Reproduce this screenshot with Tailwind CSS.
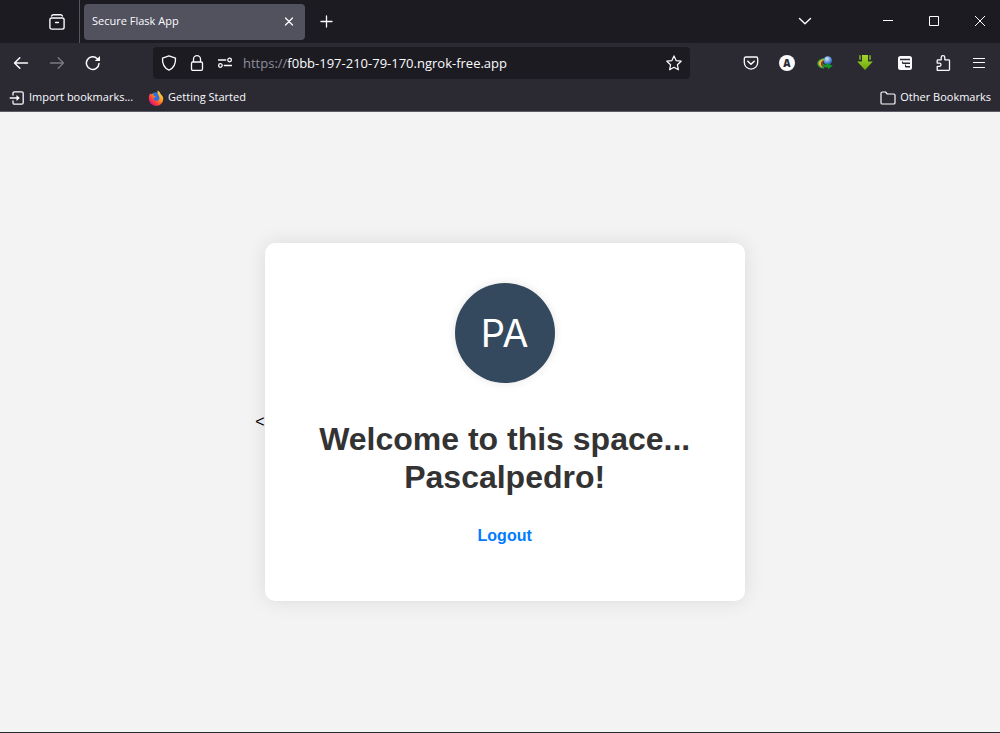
<!DOCTYPE html>
<html lang="en">
<head>
<meta charset="utf-8">
<title>Secure Flask App</title>
<script src="https://cdn.jsdelivr.net/npm/@tailwindcss/browser@4"></script>
</head>
<body class="flex min-h-screen flex-col bg-[#f3f3f3] font-['Liberation_Sans',Arial,sans-serif]">
<header class="bg-[#2b2a33] font-['Open_Sans',sans-serif] text-[11px] text-[#fbfbfe]">
  <!-- Tab strip -->
  <div class="flex h-[43px] items-center bg-[#1c1b22] pr-2">
    <div class="flex h-full w-20 items-center justify-end border-r border-[#55545e] pr-3.5">
      <button aria-label="View" class="size-4"><svg class="size-4" viewBox="0 0 16 16" fill="none" stroke="currentColor" stroke-width="1.4" stroke-linecap="round"><path d="M2.600 2C3 .9 3.600.7 4.400.7h7.200c.8 0 1.400.2 1.800 1.300"/><rect x=".9" y="4" width="14.200" height="11.100" rx="1.800"/><path d="M6.600 8.500h2.800"/></svg></button>
    </div>
    <div class="ml-1 flex h-9 w-[221px] items-center justify-between rounded bg-[#52525e] pr-2.5 pl-2">
      <span>Secure Flask App</span>
      <button aria-label="Close tab" class="grid size-3 place-items-center"><svg class="size-2.5" viewBox="0 0 10 10" stroke="currentColor" stroke-width="1.3" stroke-linecap="round"><path d="M1.500 1l7 7M8.500 1l-7 7"/></svg></button>
    </div>
    <button aria-label="New tab" class="ml-2.5 grid size-6 place-items-center"><svg class="size-3.5" viewBox="0 0 14 14" stroke="currentColor" stroke-width="1.3" stroke-linecap="round"><path d="M6.500 1v11M1 6.500h11"/></svg></button>
    <div class="ml-auto flex items-center">
      <button aria-label="List all tabs" class="mr-[59px] grid size-6 place-items-center"><svg class="size-3.5" viewBox="0 0 14 14" fill="none" stroke="currentColor" stroke-width="1.4" stroke-linecap="round" stroke-linejoin="round"><path d="M1.500 3.500L7 8.800 12.500 3.500"/></svg></button>
      <div class="flex gap-[22px]">
        <button aria-label="Minimize" class="grid size-6 place-items-center"><svg class="size-3" viewBox="0 0 12 12" stroke="#fff"><path d="M1 4.500h10"/></svg></button>
        <button aria-label="Maximize" class="grid size-6 place-items-center"><svg class="size-3" viewBox="0 0 12 12" fill="none" stroke="#fff"><path d="M1.500 .5h9v9h-9z"/></svg></button>
        <button aria-label="Close" class="grid size-6 place-items-center"><svg class="size-3" viewBox="0 0 12 12" stroke="#fff"><path d="M1 0l10 10M11 0L1 10"/></svg></button>
      </div>
    </div>
  </div>
  <!-- Navigation bar -->
  <div class="flex h-10 items-center px-[9px]">
    <div class="flex gap-3">
      <button aria-label="Back" class="grid size-6 place-items-center"><svg class="size-4" viewBox="0 0 16 16" fill="none" stroke="currentColor" stroke-width="1.5" stroke-linecap="round" stroke-linejoin="round"><path d="M14.500 8h-13M6.800 2.700L1.500 8l5.300 5.300"/></svg></button>
      <button aria-label="Forward" disabled class="grid size-6 place-items-center text-[#7b7a82]"><svg class="size-4" viewBox="0 0 16 16" fill="none" stroke="currentColor" stroke-width="1.300" stroke-linecap="round" stroke-linejoin="round"><path d="M1.500 8h13M9.200 2.700L14.500 8l-5.300 5.300"/></svg></button>
      <button aria-label="Reload" class="grid size-6 place-items-center"><svg class="size-4" viewBox="0 0 16 16" fill="none" stroke="currentColor" stroke-width="1.500" stroke-linecap="round"><path d="M14 8.500A6.300 6.300 0 1 1 12.300 3.800"/><path d="M15 .9v5.200h-5.200z" fill="currentColor" stroke="none"/></svg></button>
    </div>
    <div class="ml-12 flex h-8 min-w-0 flex-1 items-center rounded bg-[#1c1b22] px-2">
      <button aria-label="Tracking protection" class="size-4"><svg class="size-4" viewBox="0 0 16 16" fill="none" stroke="currentColor" stroke-width="1.300" stroke-linejoin="round"><path d="M8 .8L14.500 3.200c.3 4.800-1.300 9.500-6.500 12C2.800 12.700 1.200 8 1.500 3.200z"/></svg></button>
      <button aria-label="Site security" class="ml-3 size-4"><svg class="size-4" viewBox="0 0 16 16" fill="none" stroke="currentColor" stroke-width="1.300"><rect x="2.500" y="7" width="11" height="8.300" rx="1.300"/><path d="M4.500 7V4.200a3.500 3.500 0 0 1 7 0V7"/></svg></button>
      <button aria-label="Permissions" class="ml-3 size-4"><svg class="size-4" viewBox="0 0 16 16" fill="none" stroke="currentColor" stroke-width="1.300" stroke-linecap="round"><path d="M1.500 5h7.200M7.300 10.500h7.200"/><circle cx="12.600" cy="5" r="1.800"/><circle cx="3.400" cy="10.500" r="1.800"/></svg></button>
      <label for="url" class="ml-2.5 pt-0.5 text-[13px] text-[#8f8f9d]">https://</label>
      <input id="url" type="text" value="f0bb-197-210-79-170.ngrok-free.app" class="min-w-0 flex-1 bg-transparent pt-0.5 text-[13px] outline-none">
      <button aria-label="Bookmark this page" class="size-4"><svg class="size-4" viewBox="0 0 16 16" fill="none" stroke="currentColor" stroke-width="1.200" stroke-linejoin="round"><path d="M8 .9l2.100 4.700 5.100.6-3.800 3.500 1 5.100L8 12.300l-4.400 2.500 1-5.100L.8 6.200l5.100-.6z"/></svg></button>
    </div>
    <div class="ml-[49px] flex gap-3">
      <button aria-label="Save to Pocket" class="grid h-6 w-6 place-items-center"><svg class="size-4" viewBox="0 0 16 16" fill="none" stroke="currentColor" stroke-width="1.300" stroke-linecap="round" stroke-linejoin="round"><path d="M2.700 2h10.600c.8 0 1.400.6 1.400 1.400v4A6.700 6.700 0 0 1 1.300 7.400v-4C1.300 2.600 1.900 2 2.700 2z"/><path d="M4.800 6.200L8 9.200l3.200-3" stroke-width="1.500"/></svg></button>
      <button aria-label="Account" class="grid h-6 w-6 place-items-center"><span class="grid size-4 place-items-center rounded-full bg-[#fbfbfe] text-[10px] leading-none font-extrabold text-[#2b2a33]">A</span></button>
      <button aria-label="Download manager" class="grid h-6 w-7 place-items-center"><svg class="size-4" viewBox="0 0 16 16"><defs><radialGradient id="globe" cx=".4" cy=".3" r=".7"><stop offset="0" stop-color="#d5eafc"/><stop offset=".5" stop-color="#6d9fdf"/><stop offset="1" stop-color="#2355a0"/></radialGradient></defs><circle cx="10.800" cy="5.600" r="4.300" fill="url(#globe)"/><path d="M7.500 3C3 3.500 0 6 .3 9c.4 3 4 4.800 7.200 4.300l-.6-1.600C4.500 11.500 2.800 10.400 3 8.600 3.200 6.800 5 5 7.500 4.400z" fill="#3aa04a"/><path d="M7 4C3.500 4.500 1.500 6.500 1.700 8.700c.3 2 2.300 3.200 4.800 3.500C4.300 10.800 3.800 9.500 4.200 8 4.600 6.500 5.600 5.300 7.200 5z" fill="#f0b52b"/><path d="M6 5.600C3.700 7.300 3.600 10.300 6 11.800l1.300-.8C5.300 9.700 5.200 7.500 6.700 5.800z" fill="#a83a2e"/><path d="M6.200 6.800c-.6 1.900.6 3.200 3.300 3L9.500 8.200l6.300 2.600-4.800 3.400v-1.700C7.400 13 4.400 10.300 6.200 6.800z" fill="#12992a"/></svg></button>
      <button aria-label="Downloads" class="grid h-6 w-7 place-items-center"><svg class="size-4" viewBox="0 0 16 16"><defs><linearGradient id="lime" x2="0" y2="1"><stop stop-color="#a5d82d"/><stop offset="1" stop-color="#6ea70d"/></linearGradient></defs><path d="M5 0h6v6.500h4.800L8 15 .2 6.500H5z" fill="url(#lime)"/><path d="M2 .3h2v4.500H2zM12 .3h2v4.500h-2z" fill="#6d9420"/></svg></button>
      <button aria-label="Reader tools" class="grid h-6 w-7 place-items-center"><svg class="size-4" viewBox="0 0 16 16" fill="#fbfbfe"><path d="M3.500 1h9A2.500 2.500 0 0 1 15 3.500v9a2.500 2.500 0 0 1-2.500 2.500h-9A2.500 2.500 0 0 1 1 12.500v-9A2.500 2.500 0 0 1 3.500 1z"/><path d="M3 4.500h10M6 8.200h7M8.800 11.700H13" stroke="#2b2a33" stroke-width="1.500"/><path d="M5.500 6.500v2.200M8.500 9.500v2.700" stroke="#2b2a33"/></svg></button>
      <button aria-label="Extensions" class="grid h-6 w-6 place-items-center"><svg class="size-4" viewBox="0 0 16 16" fill="none" stroke="currentColor" stroke-width="1.300" stroke-linejoin="round"><path d="M2.200 15.300v-4h2.200a1.600 1.600 0 0 0 0-3.200H2.200V5.600c0-.5.300-.8.800-.8h3.200V2.500a1.800 1.800 0 0 1 3.600 0v2.300h3.900c.5 0 .8.300.8.800v8.900c0 .5-.3.800-.8.800z"/></svg></button>
      <button aria-label="Menu" class="grid h-6 w-6 place-items-center"><svg class="size-4" viewBox="0 0 16 16" stroke="currentColor" stroke-width="1.200" stroke-linecap="round"><path d="M2.500 3.500h11M2.500 7.500h11M2.500 12.500h11"/></svg></button>
    </div>
  </div>
  <!-- Bookmarks toolbar -->
  <nav class="flex h-[29px] items-center border-b border-[#5b5b66] px-[9px] pt-px">
    <a href="#" class="flex items-center gap-1"><svg class="size-4" viewBox="0 0 16 16" fill="none" stroke="currentColor" stroke-width="1.300" stroke-linecap="round" stroke-linejoin="round"><path d="M4 5V3.300c0-.9.600-1.500 1.500-1.500h7.200c.9 0 1.500.6 1.500 1.500v9.400c0 .9-.6 1.500-1.500 1.500H5.500c-.9 0-1.500-.6-1.500-1.500V11M1.200 8h7"/><path d="M7.500 5l3.300 3-3.300 3z" fill="currentColor" stroke="none"/></svg>Import bookmarks...</a>
    <a href="#" class="ml-[15px] flex items-center gap-1"><svg class="size-4" viewBox="0 0 16 16"><defs><linearGradient id="flame" x1=".9" y1=".1" x2=".2" y2=".9"><stop stop-color="#ffe64a"/><stop offset=".4" stop-color="#ff9a1f"/><stop offset=".75" stop-color="#ff3b3f"/><stop offset="1" stop-color="#d9157b"/></linearGradient></defs><circle cx="8" cy="8.300" r="6" fill="#2d6fe0"/><path d="M9.500.5c2 1 2.900 2.300 3.200 3.700 1.700 1.300 2.600 2.900 2.500 4.700A7.200 7.200 0 0 1 .8 8.700C.7 6.600 1.300 4.600 2.600 3l.3 1.500C3.700 3.700 4.700 3.500 5.600 3.700 5 4.700 5.300 5.400 6.200 5.800l1.600.5c-.2.900-1.200 1-1.800 1.500-.7 2 .6 3.300 2.300 3.300 2.100 0 3.300-1.700 3.100-3.400-.2-1.900-2.200-3.200-1.900-7.200z" fill="url(#flame)"/></svg>Getting Started</a>
    <a href="#" class="ml-auto flex items-center gap-1"><svg class="size-4" viewBox="0 0 16 16" fill="none" stroke="currentColor" stroke-width="1.200" stroke-linejoin="round"><path d="M1 3.300c0-.8.500-1.300 1.300-1.300h3.200l1.800 2h6.400c.8 0 1.300.5 1.300 1.300v7.400c0 .8-.5 1.300-1.300 1.300H2.300c-.8 0-1.300-.5-1.300-1.300z"/></svg>Other Bookmarks</a>
  </nav>
</header>
<main class="flex flex-1 items-center justify-center border-b border-[#2b2a33] text-base text-black">
  &lt;
  <section class="w-[480px] rounded-[10px] bg-white p-10 text-center shadow-[0_0_20px_rgba(0,0,0,0.1)]">
    <div class="mx-auto grid size-[100px] place-items-center rounded-full bg-[#34495e] font-['Inter',sans-serif] text-[38px] leading-none font-normal text-white shadow-[0_0_10px_rgba(0,0,0,0.1)]">PA</div>
    <h1 class="mt-[37px] text-[32px] leading-[38px] font-bold text-[#333]">Welcome to this space... Pascalpedro!</h1>
    <a href="#" class="mt-[30px] mb-[15px] inline-block leading-5 font-bold text-[#007bff]">Logout</a>
  </section>
</main>
</body>
</html>
